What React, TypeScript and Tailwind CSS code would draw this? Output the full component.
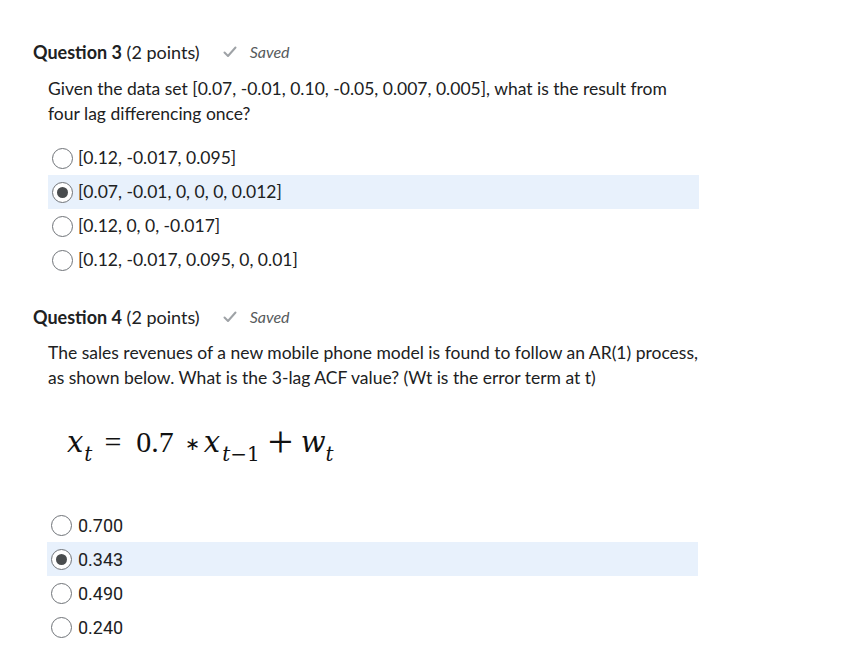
import React from "react";

const Radio = ({ checked }: { checked?: boolean }) => (
  <span className="flex h-[21px] w-[21px] shrink-0 items-center justify-center rounded-full border border-[#6f7378] bg-white">
    {checked && <span className="h-[11px] w-[11px] rounded-full bg-[#494c4e]" />}
  </span>
);

const Check = () => (
  <svg width="14" height="12" viewBox="0 0 14 12" className="shrink-0">
    <path d="M1.5 6.5 L5 10 L12.5 1.5" fill="none" stroke="#9ea2a6" strokeWidth="2" strokeLinecap="round" strokeLinejoin="round" />
  </svg>
);

const Header = ({ n }: { n: number }) => (
  <div className="flex items-center h-[24px]">
    <span className="text-[18px] text-[#202122]">
      <span className="font-bold">Question {n}</span> (2 points)
    </span>
    <span className="ml-[23px] flex items-center gap-[13px]">
      <Check />
      <span className="italic text-[16px] text-[#565a5c]">Saved</span>
    </span>
  </div>
);

const Option = ({ text, checked, font, gap }: { text: string; checked?: boolean; font: string; gap: string }) => (
  <div className={`flex h-[34px] w-[651px] items-center ${gap} pl-[4px] ${checked ? "bg-[#e8f1fc]" : ""}`}>
    <Radio checked={checked} />
    <span className={`${font} text-[#202122]`}>{text}</span>
  </div>
);

export default function App() {
  return (
    <div className="min-h-[657px] w-[866px] bg-white pl-[33px] pt-[40px] font-['Lato',sans-serif]">
      <Header n={3} />
      <div className="pl-[15px] pt-[12px] text-[17.5px] leading-[25px] text-[#202122]">
        <p>Given the data set [0.07, -0.01, 0.10, -0.05, 0.007, 0.005], what is the result from</p>
        <p>four lag differencing once?</p>
      </div>
      <div className="pl-[15px] pt-[15px]">
        <Option gap="gap-[5px]" font="font-['Lato',sans-serif] text-[17.5px]" text="[0.12, -0.017, 0.095]" />
        <Option gap="gap-[5px]" font="font-['Lato',sans-serif] text-[17.5px]" text="[0.07, -0.01, 0, 0, 0, 0.012]" checked />
        <Option gap="gap-[5px]" font="font-['Lato',sans-serif] text-[17.5px]" text="[0.12, 0, 0, -0.017]" />
        <Option gap="gap-[5px]" font="font-['Lato',sans-serif] text-[17.5px]" text="[0.12, -0.017, 0.095, 0, 0.01]" />
      </div>
      <div className="pt-[28px]">
        <Header n={4} />
      </div>
      <div className="pl-[15px] pt-[11px] text-[17.5px] leading-[25px] text-[#202122]">
        <p>The sales revenues of a new mobile phone model is found to follow an AR(1) process,</p>
        <p>as shown below. What is the 3-lag ACF value? (Wt is the error term at t)</p>
      </div>
      <div className="flex h-[118px] items-baseline pl-[34px] pt-[37px] font-['Liberation_Serif',serif] text-[30px] text-[#111] leading-none">
        <span className="font-['DejaVu_Serif',serif] text-[29px] italic">x</span>
        <span className="relative top-[9px] ml-[1px] font-['DejaVu_Serif',serif] text-[20px] italic">t</span>
        <span className="ml-[12px]">=</span>
        <span className="ml-[15px]">0.7</span>
        <span className="ml-[11px] inline-block w-[11px] text-center text-[18px] relative -top-[2px]">∗</span>
        <span className="ml-[8px] font-['DejaVu_Serif',serif] text-[29px] italic">x</span>
        <span className="relative top-[9px] ml-[2px] font-['DejaVu_Serif',serif] text-[20px]">
          <span className="italic">t</span>−1
        </span>
        <span className="ml-[7px] inline-block w-[28px] text-center">
          <span className="inline-block scale-[1.5]">+</span>
        </span>
        <span className="ml-[6px] font-['DejaVu_Serif',serif] text-[29px] italic">w</span>
        <span className="relative top-[9px] font-['DejaVu_Serif',serif] text-[20px] italic">t</span>
      </div>
      <div className="pl-[14px]">
        <Option gap="gap-[6px]" font="font-['Roboto',sans-serif] text-[18px]" text="0.700" />
        <Option gap="gap-[6px]" font="font-['Roboto',sans-serif] text-[18px]" text="0.343" checked />
        <Option gap="gap-[6px]" font="font-['Roboto',sans-serif] text-[18px]" text="0.490" />
        <Option gap="gap-[6px]" font="font-['Roboto',sans-serif] text-[18px]" text="0.240" />
      </div>
    </div>
  );
}
